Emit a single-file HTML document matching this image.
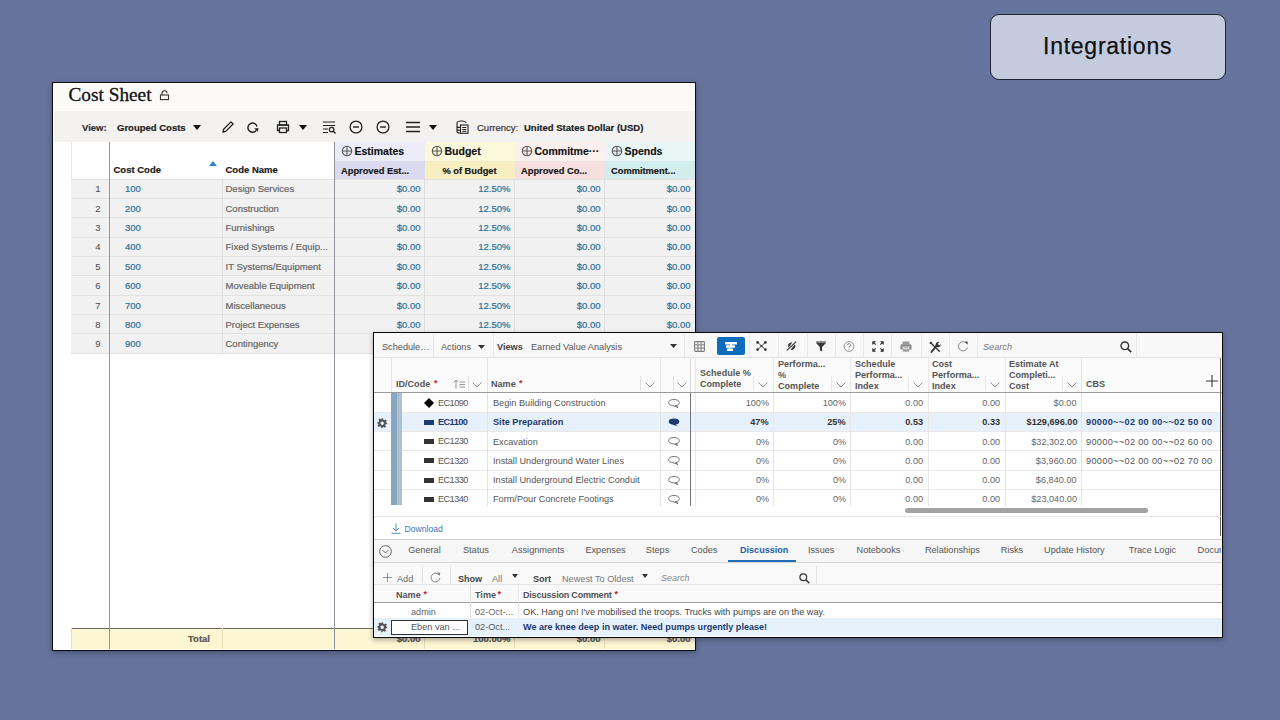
<!DOCTYPE html>
<html><head><meta charset="utf-8"><style>
*{margin:0;padding:0;box-sizing:border-box}
html,body{width:1280px;height:720px;overflow:hidden}
body{background:#66739c;font-family:"Liberation Sans",sans-serif;position:relative}
.a{position:absolute}
.t{position:absolute;white-space:nowrap;line-height:1}
.m{-webkit-text-stroke:0.2px currentColor}
svg{position:absolute;overflow:visible}
</style></head><body>
<div class="a" style="left:990px;top:14px;width:236px;height:66px;background:#c4cbdf;border:1px solid #1d2230;border-radius:9px"></div>
<div class="t " style="left:1043px;top:34.5px;transform-origin:left;font-size:23px;letter-spacing:0.75px;color:#111;-webkit-text-stroke:0.25px #111">Integrations</div>
<div class="a" style="left:52px;top:82px;width:644px;height:569px;background:#fff;border:1.5px solid #0c0c0c;border-right-width:1.2px;box-shadow:0 2px 5px rgba(20,25,50,0.35)"></div>
<div class="a" style="left:53.5px;top:83.5px;width:641px;height:27.5px;background:#fcfaf9"></div>
<div class="a" style="left:53.5px;top:111px;width:641px;height:31px;background:#f3f2f1"></div>
<div class="t " style="left:68.5px;top:84.6px;transform-origin:left;font-family:Liberation Serif,serif;font-size:19.3px;color:#111;-webkit-text-stroke:0.3px #111">Cost Sheet</div>
<svg style="left:159px;top:90px" width="11" height="11" viewBox="0 0 11 11"><path d="M3 5 V3.2 A2.5 2.5 0 0 1 8 3.2" fill="none" stroke="#333" stroke-width="1.1"/><rect x="1.5" y="5" width="8" height="4.6" fill="none" stroke="#333" stroke-width="1.1"/></svg>
<div class="t " style="left:82px;top:122.7px;transform-origin:left;-webkit-text-stroke:0.2px currentColor;font-size:9.5px;font-weight:bold;color:#333">View:</div>
<div class="t " style="left:117px;top:122.7px;transform-origin:left;-webkit-text-stroke:0.2px currentColor;font-size:9.5px;font-weight:bold;color:#222">Grouped Costs</div>
<svg style="left:193px;top:125px" width="8" height="5" viewBox="0 0 8 5"><path d="M0 0 H8 L4.0 5 Z" fill="#111"/></svg>
<svg style="left:221px;top:120px" width="14" height="14" viewBox="0 0 14 14"><path d="M2 12 L2.6 9.3 L10 1.9 L12.1 4 L4.7 11.4 Z" fill="none" stroke="#222" stroke-width="1.3" stroke-linejoin="round"/></svg>
<svg style="left:246px;top:121px" width="14" height="13" viewBox="0 0 14 13"><path d="M11 5.5 A4.6 4.6 0 1 0 10.2 9.4" fill="none" stroke="#222" stroke-width="1.4"/><path d="M8.2 7.2 L12.6 7.2 L11.6 10.8 Z" fill="#222"/></svg>
<svg style="left:276px;top:120px" width="14" height="14" viewBox="0 0 14 14"><rect x="3.5" y="1.5" width="7" height="3.5" fill="none" stroke="#222" stroke-width="1.3"/><path d="M3.5 10.5 H1.5 V5 H12.5 V10.5 H10.5" fill="none" stroke="#222" stroke-width="1.3"/><rect x="3.5" y="8" width="7" height="4.5" fill="none" stroke="#222" stroke-width="1.3"/></svg>
<svg style="left:299px;top:125px" width="8" height="5" viewBox="0 0 8 5"><path d="M0 0 H8 L4.0 5 Z" fill="#111"/></svg>
<svg style="left:322px;top:120px" width="15" height="14" viewBox="0 0 15 14"><path d="M1 2 H13 M1 5.5 H13 M1 9 H6 M1 12.5 H6" stroke="#222" stroke-width="1.2"/><circle cx="9.6" cy="9.6" r="2.3" fill="none" stroke="#222" stroke-width="1.2"/><path d="M11.3 11.3 L13.5 13.5" stroke="#222" stroke-width="1.4"/></svg>
<svg style="left:348.8px;top:120px" width="14" height="14" viewBox="0 0 14 14"><circle cx="7" cy="7" r="5.9" fill="none" stroke="#222" stroke-width="1.3"/><path d="M4 7 H10" stroke="#222" stroke-width="1.4"/></svg>
<svg style="left:375.7px;top:120px" width="14" height="14" viewBox="0 0 14 14"><circle cx="7" cy="7" r="5.9" fill="none" stroke="#222" stroke-width="1.3"/><path d="M4 7 H10" stroke="#222" stroke-width="1.4"/></svg>
<svg style="left:406px;top:121px" width="14" height="12" viewBox="0 0 14 12"><path d="M0 1.5 H14 M0 6 H14 M0 10.5 H14" stroke="#222" stroke-width="1.4"/></svg>
<svg style="left:429px;top:125px" width="8" height="5" viewBox="0 0 8 5"><path d="M0 0 H8 L4.0 5 Z" fill="#111"/></svg>
<svg style="left:455px;top:120px" width="14" height="14" viewBox="0 0 14 14"><path d="M2 3 V11.5 Q2 13 5 13 M2 3 Q2 1 6.5 1 Q11 1 11 3 M2 6 Q2 7.5 5 7.5 M2 9 Q2 10.3 5 10.3" fill="none" stroke="#222" stroke-width="1.1"/><rect x="5.5" y="5" width="7.5" height="8.3" fill="none" stroke="#222" stroke-width="1.1"/><path d="M7.3 7.5 H11.3 M7.3 9.5 H11.3 M7.3 11.3 H11.3" stroke="#222" stroke-width="1"/></svg>
<div class="t " style="left:477px;top:122.7px;transform-origin:left;-webkit-text-stroke:0.2px currentColor;font-size:9.5px;color:#333">Currency:</div>
<div class="t " style="left:524px;top:122.7px;transform-origin:left;-webkit-text-stroke:0.2px currentColor;font-size:9.5px;font-weight:bold;color:#222">United States Dollar (USD)</div>
<div class="a" style="left:70.5px;top:179.0px;width:624.0px;height:174.14999999999998px;background:#f1f1f1"></div>
<div class="a" style="left:334.5px;top:142px;width:90.0px;height:18.5px;background:#ecebf8"></div>
<div class="a" style="left:334.5px;top:160.5px;width:90.0px;height:18px;background:#dcdaee"></div>
<svg style="left:341.0px;top:145px" width="12" height="12" viewBox="0 0 12 12"><circle cx="6" cy="6" r="4.7" fill="none" stroke="#555" stroke-width="1.1"/><path d="M6 1.5 V10.5 M1.5 6 H10.5" stroke="#555" stroke-width="1.1"/></svg>
<div class="t " style="left:354.5px;top:145.5px;transform-origin:left;-webkit-text-stroke:0.15px currentColor;font-size:10.5px;font-weight:bold;color:#111">Estimates</div>
<div class="t " style="left:341.0px;top:167.3px;transform-origin:left;-webkit-text-stroke:0.2px currentColor;font-size:9.3px;font-weight:bold;color:#1a1a1a">Approved Est...</div>
<div class="a" style="left:424.5px;top:142px;width:90.0px;height:18.5px;background:#fcf8dc"></div>
<div class="a" style="left:424.5px;top:160.5px;width:90.0px;height:18px;background:#f7efc2"></div>
<svg style="left:431.0px;top:145px" width="12" height="12" viewBox="0 0 12 12"><circle cx="6" cy="6" r="4.7" fill="none" stroke="#555" stroke-width="1.1"/><path d="M6 1.5 V10.5 M1.5 6 H10.5" stroke="#555" stroke-width="1.1"/></svg>
<div class="t " style="left:444.5px;top:145.5px;transform-origin:left;-webkit-text-stroke:0.15px currentColor;font-size:10.5px;font-weight:bold;color:#111">Budget</div>
<div class="t " style="left:369.5px;width:200px;text-align:center;top:167.3px;-webkit-text-stroke:0.2px currentColor;font-size:9.3px;font-weight:bold;color:#1a1a1a">% of Budget</div>
<div class="a" style="left:514.5px;top:142px;width:90.0px;height:18.5px;background:#fcf0ef"></div>
<div class="a" style="left:514.5px;top:160.5px;width:90.0px;height:18px;background:#f6dfdf"></div>
<svg style="left:521.0px;top:145px" width="12" height="12" viewBox="0 0 12 12"><circle cx="6" cy="6" r="4.7" fill="none" stroke="#555" stroke-width="1.1"/><path d="M6 1.5 V10.5 M1.5 6 H10.5" stroke="#555" stroke-width="1.1"/></svg>
<div class="t " style="left:534.5px;top:145.5px;transform-origin:left;-webkit-text-stroke:0.15px currentColor;font-size:10.5px;font-weight:bold;color:#111">Commitme&middot;&middot;&middot;</div>
<div class="t " style="left:521.0px;top:167.3px;transform-origin:left;-webkit-text-stroke:0.2px currentColor;font-size:9.3px;font-weight:bold;color:#1a1a1a">Approved Co...</div>
<div class="a" style="left:604.5px;top:142px;width:90.0px;height:18.5px;background:#e9f6f6"></div>
<div class="a" style="left:604.5px;top:160.5px;width:90.0px;height:18px;background:#d3edee"></div>
<svg style="left:611.0px;top:145px" width="12" height="12" viewBox="0 0 12 12"><circle cx="6" cy="6" r="4.7" fill="none" stroke="#555" stroke-width="1.1"/><path d="M6 1.5 V10.5 M1.5 6 H10.5" stroke="#555" stroke-width="1.1"/></svg>
<div class="t " style="left:624.5px;top:145.5px;transform-origin:left;-webkit-text-stroke:0.15px currentColor;font-size:10.5px;font-weight:bold;color:#111">Spends</div>
<div class="t " style="left:611.0px;top:167.3px;transform-origin:left;-webkit-text-stroke:0.2px currentColor;font-size:9.3px;font-weight:bold;color:#1a1a1a">Commitment...</div>
<div class="t " style="left:113.5px;top:165px;transform-origin:left;-webkit-text-stroke:0.2px currentColor;font-size:9.5px;font-weight:bold;color:#1a1a1a">Cost Code</div>
<div class="t " style="left:225.5px;top:165px;transform-origin:left;-webkit-text-stroke:0.2px currentColor;font-size:9.5px;font-weight:bold;color:#1a1a1a">Code Name</div>
<svg style="left:208.5px;top:161px" width="8" height="5" viewBox="0 0 8 5"><path d="M0 5 H8 L4 0 Z" fill="#2b86c9"/></svg>
<div class="a" style="left:70.5px;top:178.5px;width:624.0px;height:1px;background:#e2e2e2"></div>
<div class="a" style="left:70.5px;top:197.85px;width:624.0px;height:1px;background:#e2e2e2"></div>
<div class="a" style="left:70.5px;top:217.2px;width:624.0px;height:1px;background:#e2e2e2"></div>
<div class="a" style="left:70.5px;top:236.55px;width:624.0px;height:1px;background:#e2e2e2"></div>
<div class="a" style="left:70.5px;top:255.89999999999998px;width:624.0px;height:1px;background:#e2e2e2"></div>
<div class="a" style="left:70.5px;top:275.25px;width:624.0px;height:1px;background:#e2e2e2"></div>
<div class="a" style="left:70.5px;top:294.6px;width:624.0px;height:1px;background:#e2e2e2"></div>
<div class="a" style="left:70.5px;top:313.95000000000005px;width:624.0px;height:1px;background:#e2e2e2"></div>
<div class="a" style="left:70.5px;top:333.3px;width:624.0px;height:1px;background:#e2e2e2"></div>
<div class="a" style="left:70.5px;top:352.65px;width:624.0px;height:1px;background:#e2e2e2"></div>
<div class="t " style="right:1179.5px;top:184.4px;transform-origin:right;font-size:9.5px;color:#4a4a4a">1</div>
<div class="t " style="left:125px;top:184.4px;transform-origin:left;-webkit-text-stroke:0.2px currentColor;font-size:9.5px;color:#2a7099">100</div>
<div class="t " style="left:225.5px;top:184.4px;transform-origin:left;-webkit-text-stroke:0.2px currentColor;font-size:9.5px;color:#666">Design Services</div>
<div class="t " style="right:859.5px;top:184.4px;transform-origin:right;-webkit-text-stroke:0.2px currentColor;font-size:9.5px;color:#2a7099">$0.00</div>
<div class="t " style="right:769.5px;top:184.4px;transform-origin:right;-webkit-text-stroke:0.2px currentColor;font-size:9.5px;color:#2a7099">12.50%</div>
<div class="t " style="right:679.5px;top:184.4px;transform-origin:right;-webkit-text-stroke:0.2px currentColor;font-size:9.5px;color:#2a7099">$0.00</div>
<div class="t " style="right:589.5px;top:184.4px;transform-origin:right;-webkit-text-stroke:0.2px currentColor;font-size:9.5px;color:#2a7099">$0.00</div>
<div class="t " style="right:1179.5px;top:203.75px;transform-origin:right;font-size:9.5px;color:#4a4a4a">2</div>
<div class="t " style="left:125px;top:203.75px;transform-origin:left;-webkit-text-stroke:0.2px currentColor;font-size:9.5px;color:#2a7099">200</div>
<div class="t " style="left:225.5px;top:203.75px;transform-origin:left;-webkit-text-stroke:0.2px currentColor;font-size:9.5px;color:#666">Construction</div>
<div class="t " style="right:859.5px;top:203.75px;transform-origin:right;-webkit-text-stroke:0.2px currentColor;font-size:9.5px;color:#2a7099">$0.00</div>
<div class="t " style="right:769.5px;top:203.75px;transform-origin:right;-webkit-text-stroke:0.2px currentColor;font-size:9.5px;color:#2a7099">12.50%</div>
<div class="t " style="right:679.5px;top:203.75px;transform-origin:right;-webkit-text-stroke:0.2px currentColor;font-size:9.5px;color:#2a7099">$0.00</div>
<div class="t " style="right:589.5px;top:203.75px;transform-origin:right;-webkit-text-stroke:0.2px currentColor;font-size:9.5px;color:#2a7099">$0.00</div>
<div class="t " style="right:1179.5px;top:223.1px;transform-origin:right;font-size:9.5px;color:#4a4a4a">3</div>
<div class="t " style="left:125px;top:223.1px;transform-origin:left;-webkit-text-stroke:0.2px currentColor;font-size:9.5px;color:#2a7099">300</div>
<div class="t " style="left:225.5px;top:223.1px;transform-origin:left;-webkit-text-stroke:0.2px currentColor;font-size:9.5px;color:#666">Furnishings</div>
<div class="t " style="right:859.5px;top:223.1px;transform-origin:right;-webkit-text-stroke:0.2px currentColor;font-size:9.5px;color:#2a7099">$0.00</div>
<div class="t " style="right:769.5px;top:223.1px;transform-origin:right;-webkit-text-stroke:0.2px currentColor;font-size:9.5px;color:#2a7099">12.50%</div>
<div class="t " style="right:679.5px;top:223.1px;transform-origin:right;-webkit-text-stroke:0.2px currentColor;font-size:9.5px;color:#2a7099">$0.00</div>
<div class="t " style="right:589.5px;top:223.1px;transform-origin:right;-webkit-text-stroke:0.2px currentColor;font-size:9.5px;color:#2a7099">$0.00</div>
<div class="t " style="right:1179.5px;top:242.45000000000002px;transform-origin:right;font-size:9.5px;color:#4a4a4a">4</div>
<div class="t " style="left:125px;top:242.45000000000002px;transform-origin:left;-webkit-text-stroke:0.2px currentColor;font-size:9.5px;color:#2a7099">400</div>
<div class="t " style="left:225.5px;top:242.45000000000002px;transform-origin:left;-webkit-text-stroke:0.2px currentColor;font-size:9.5px;color:#666">Fixed Systems / Equip...</div>
<div class="t " style="right:859.5px;top:242.45000000000002px;transform-origin:right;-webkit-text-stroke:0.2px currentColor;font-size:9.5px;color:#2a7099">$0.00</div>
<div class="t " style="right:769.5px;top:242.45000000000002px;transform-origin:right;-webkit-text-stroke:0.2px currentColor;font-size:9.5px;color:#2a7099">12.50%</div>
<div class="t " style="right:679.5px;top:242.45000000000002px;transform-origin:right;-webkit-text-stroke:0.2px currentColor;font-size:9.5px;color:#2a7099">$0.00</div>
<div class="t " style="right:589.5px;top:242.45000000000002px;transform-origin:right;-webkit-text-stroke:0.2px currentColor;font-size:9.5px;color:#2a7099">$0.00</div>
<div class="t " style="right:1179.5px;top:261.79999999999995px;transform-origin:right;font-size:9.5px;color:#4a4a4a">5</div>
<div class="t " style="left:125px;top:261.79999999999995px;transform-origin:left;-webkit-text-stroke:0.2px currentColor;font-size:9.5px;color:#2a7099">500</div>
<div class="t " style="left:225.5px;top:261.79999999999995px;transform-origin:left;-webkit-text-stroke:0.2px currentColor;font-size:9.5px;color:#666">IT Systems/Equipment</div>
<div class="t " style="right:859.5px;top:261.79999999999995px;transform-origin:right;-webkit-text-stroke:0.2px currentColor;font-size:9.5px;color:#2a7099">$0.00</div>
<div class="t " style="right:769.5px;top:261.79999999999995px;transform-origin:right;-webkit-text-stroke:0.2px currentColor;font-size:9.5px;color:#2a7099">12.50%</div>
<div class="t " style="right:679.5px;top:261.79999999999995px;transform-origin:right;-webkit-text-stroke:0.2px currentColor;font-size:9.5px;color:#2a7099">$0.00</div>
<div class="t " style="right:589.5px;top:261.79999999999995px;transform-origin:right;-webkit-text-stroke:0.2px currentColor;font-size:9.5px;color:#2a7099">$0.00</div>
<div class="t " style="right:1179.5px;top:281.15px;transform-origin:right;font-size:9.5px;color:#4a4a4a">6</div>
<div class="t " style="left:125px;top:281.15px;transform-origin:left;-webkit-text-stroke:0.2px currentColor;font-size:9.5px;color:#2a7099">600</div>
<div class="t " style="left:225.5px;top:281.15px;transform-origin:left;-webkit-text-stroke:0.2px currentColor;font-size:9.5px;color:#666">Moveable Equipment</div>
<div class="t " style="right:859.5px;top:281.15px;transform-origin:right;-webkit-text-stroke:0.2px currentColor;font-size:9.5px;color:#2a7099">$0.00</div>
<div class="t " style="right:769.5px;top:281.15px;transform-origin:right;-webkit-text-stroke:0.2px currentColor;font-size:9.5px;color:#2a7099">12.50%</div>
<div class="t " style="right:679.5px;top:281.15px;transform-origin:right;-webkit-text-stroke:0.2px currentColor;font-size:9.5px;color:#2a7099">$0.00</div>
<div class="t " style="right:589.5px;top:281.15px;transform-origin:right;-webkit-text-stroke:0.2px currentColor;font-size:9.5px;color:#2a7099">$0.00</div>
<div class="t " style="right:1179.5px;top:300.5px;transform-origin:right;font-size:9.5px;color:#4a4a4a">7</div>
<div class="t " style="left:125px;top:300.5px;transform-origin:left;-webkit-text-stroke:0.2px currentColor;font-size:9.5px;color:#2a7099">700</div>
<div class="t " style="left:225.5px;top:300.5px;transform-origin:left;-webkit-text-stroke:0.2px currentColor;font-size:9.5px;color:#666">Miscellaneous</div>
<div class="t " style="right:859.5px;top:300.5px;transform-origin:right;-webkit-text-stroke:0.2px currentColor;font-size:9.5px;color:#2a7099">$0.00</div>
<div class="t " style="right:769.5px;top:300.5px;transform-origin:right;-webkit-text-stroke:0.2px currentColor;font-size:9.5px;color:#2a7099">12.50%</div>
<div class="t " style="right:679.5px;top:300.5px;transform-origin:right;-webkit-text-stroke:0.2px currentColor;font-size:9.5px;color:#2a7099">$0.00</div>
<div class="t " style="right:589.5px;top:300.5px;transform-origin:right;-webkit-text-stroke:0.2px currentColor;font-size:9.5px;color:#2a7099">$0.00</div>
<div class="t " style="right:1179.5px;top:319.85px;transform-origin:right;font-size:9.5px;color:#4a4a4a">8</div>
<div class="t " style="left:125px;top:319.85px;transform-origin:left;-webkit-text-stroke:0.2px currentColor;font-size:9.5px;color:#2a7099">800</div>
<div class="t " style="left:225.5px;top:319.85px;transform-origin:left;-webkit-text-stroke:0.2px currentColor;font-size:9.5px;color:#666">Project Expenses</div>
<div class="t " style="right:859.5px;top:319.85px;transform-origin:right;-webkit-text-stroke:0.2px currentColor;font-size:9.5px;color:#2a7099">$0.00</div>
<div class="t " style="right:769.5px;top:319.85px;transform-origin:right;-webkit-text-stroke:0.2px currentColor;font-size:9.5px;color:#2a7099">12.50%</div>
<div class="t " style="right:679.5px;top:319.85px;transform-origin:right;-webkit-text-stroke:0.2px currentColor;font-size:9.5px;color:#2a7099">$0.00</div>
<div class="t " style="right:589.5px;top:319.85px;transform-origin:right;-webkit-text-stroke:0.2px currentColor;font-size:9.5px;color:#2a7099">$0.00</div>
<div class="t " style="right:1179.5px;top:339.2px;transform-origin:right;font-size:9.5px;color:#4a4a4a">9</div>
<div class="t " style="left:125px;top:339.2px;transform-origin:left;-webkit-text-stroke:0.2px currentColor;font-size:9.5px;color:#2a7099">900</div>
<div class="t " style="left:225.5px;top:339.2px;transform-origin:left;-webkit-text-stroke:0.2px currentColor;font-size:9.5px;color:#666">Contingency</div>
<div class="t " style="right:859.5px;top:339.2px;transform-origin:right;-webkit-text-stroke:0.2px currentColor;font-size:9.5px;color:#2a7099">$0.00</div>
<div class="t " style="right:769.5px;top:339.2px;transform-origin:right;-webkit-text-stroke:0.2px currentColor;font-size:9.5px;color:#2a7099">12.50%</div>
<div class="t " style="right:679.5px;top:339.2px;transform-origin:right;-webkit-text-stroke:0.2px currentColor;font-size:9.5px;color:#2a7099">$0.00</div>
<div class="t " style="right:589.5px;top:339.2px;transform-origin:right;-webkit-text-stroke:0.2px currentColor;font-size:9.5px;color:#2a7099">$0.00</div>
<div class="a" style="left:221.5px;top:179.0px;width:1px;height:174.14999999999998px;background:#dedede"></div>
<div class="a" style="left:424.0px;top:179.0px;width:1px;height:174.14999999999998px;background:#dedede"></div>
<div class="a" style="left:514.0px;top:179.0px;width:1px;height:174.14999999999998px;background:#dedede"></div>
<div class="a" style="left:604.0px;top:179.0px;width:1px;height:174.14999999999998px;background:#dedede"></div>
<div class="a" style="left:70.5px;top:142px;width:1px;height:36.5px;background:#e8e8e8"></div>
<div class="a" style="left:70.5px;top:628px;width:624.0px;height:20.5px;background:#fdf6d2"></div>
<div class="a" style="left:70.5px;top:627.5px;width:624.0px;height:1.3px;background:#6f6a5c"></div>
<div class="a" style="left:221.5px;top:628px;width:1px;height:20.5px;background:#e5ddb8"></div>
<div class="a" style="left:424.0px;top:628px;width:1px;height:20.5px;background:#e5ddb8"></div>
<div class="a" style="left:514.0px;top:628px;width:1px;height:20.5px;background:#e5ddb8"></div>
<div class="a" style="left:604.0px;top:628px;width:1px;height:20.5px;background:#e5ddb8"></div>
<div class="a" style="left:70.5px;top:628px;width:1px;height:20.5px;background:#e0dcc8"></div>
<div class="t " style="left:99px;width:200px;text-align:center;top:633.5px;-webkit-text-stroke:0.2px currentColor;font-size:9.5px;font-weight:bold;color:#555">Total</div>
<div class="t " style="right:859.5px;top:633.5px;transform-origin:right;-webkit-text-stroke:0.2px currentColor;font-size:9.5px;font-weight:bold;color:#555">$0.00</div>
<div class="t " style="right:769.5px;top:633.5px;transform-origin:right;-webkit-text-stroke:0.2px currentColor;font-size:9.5px;font-weight:bold;color:#555">100.00%</div>
<div class="t " style="right:679.5px;top:633.5px;transform-origin:right;-webkit-text-stroke:0.2px currentColor;font-size:9.5px;font-weight:bold;color:#555">$0.00</div>
<div class="t " style="right:589.5px;top:633.5px;transform-origin:right;-webkit-text-stroke:0.2px currentColor;font-size:9.5px;font-weight:bold;color:#555">$0.00</div>
<div class="a" style="left:109.0px;top:142px;width:1px;height:506.5px;background:#94949c"></div>
<div class="a" style="left:333.9px;top:142px;width:1.4px;height:506.5px;background:#92929a"></div>
<div class="a" style="left:373px;top:332px;width:850px;height:305.5px;background:#fff;border:1.2px solid #0a0a0a;border-right-width:1.8px;box-shadow:0 2px 5px rgba(20,25,50,0.35)"></div>
<div class="a" style="left:374px;top:333.2px;width:848px;height:24px;background:#f8f8f8"></div>
<div class="a" style="left:374px;top:357px;width:848px;height:1px;background:#e3e3e3"></div>
<div class="t " style="left:382px;top:341.5px;transform-origin:left;font-size:9.8px;transform:scaleX(0.935);color:#555">Schedule&hellip;</div>
<div class="a" style="left:432.5px;top:334px;width:1px;height:23px;background:#e6e6e6"></div>
<div class="t " style="left:441px;top:341.5px;transform-origin:left;font-size:9.8px;transform:scaleX(0.935);color:#555">Actions</div>
<svg style="left:477.5px;top:344.5px" width="7" height="4" viewBox="0 0 7 4"><path d="M0 0 H7 L3.5 4 Z" fill="#333"/></svg>
<div class="a" style="left:493px;top:334px;width:1px;height:23px;background:#e6e6e6"></div>
<div class="t " style="left:497px;top:341.5px;transform-origin:left;font-size:9.8px;transform:scaleX(0.935);font-weight:bold;color:#444">Views</div>
<div class="t " style="left:530.5px;top:341.5px;transform-origin:left;font-size:9.8px;transform:scaleX(0.935);color:#555">Earned Value Analysis</div>
<svg style="left:669.5px;top:344px" width="7" height="4" viewBox="0 0 7 4"><path d="M0 0 H7 L3.5 4 Z" fill="#333"/></svg>
<div class="a" style="left:684px;top:334px;width:1px;height:23px;background:#e6e6e6"></div>
<svg style="left:694.3px;top:341px" width="11" height="11" viewBox="0 0 11 11"><rect x="0.6" y="0.6" width="9.8" height="9.8" rx="0.8" fill="none" stroke="#7d7d7d" stroke-width="1.1"/><path d="M0.6 3.9 H10.4 M0.6 7.1 H10.4 M3.9 0.6 V10.4 M7.1 0.6 V10.4" stroke="#7d7d7d" stroke-width="1"/></svg>
<div class="a" style="left:717.3px;top:337px;width:27.5px;height:17.6px;background:#0f6cbd;border-radius:2px"></div>
<svg style="left:724px;top:340.5px" width="14" height="11" viewBox="0 0 14 11"><path d="M1 1 H13 V3.6 H8 V4.2 H11 V6.8 H6 V7.4 H9 V10 H3 V7.4 H5 V6.8 H2 V4.2 H6 V3.6 H1 Z" fill="#fff"/></svg>
<div class="a" style="left:749.4px;top:334px;width:1px;height:23px;background:#e8e8e8"></div>
<div class="a" style="left:777.6px;top:334px;width:1px;height:23px;background:#e8e8e8"></div>
<div class="a" style="left:806.9px;top:334px;width:1px;height:23px;background:#e8e8e8"></div>
<div class="a" style="left:835px;top:334px;width:1px;height:23px;background:#e8e8e8"></div>
<div class="a" style="left:863px;top:334px;width:1px;height:23px;background:#e8e8e8"></div>
<div class="a" style="left:891px;top:334px;width:1px;height:23px;background:#e8e8e8"></div>
<div class="a" style="left:920.5px;top:334px;width:1px;height:23px;background:#e8e8e8"></div>
<div class="a" style="left:948.7px;top:334px;width:1px;height:23px;background:#e8e8e8"></div>
<div class="a" style="left:976.8px;top:334px;width:1px;height:23px;background:#e8e8e8"></div>
<div class="a" style="left:1136px;top:334px;width:1px;height:23px;background:#e8e8e8"></div>
<svg style="left:756px;top:341.3px" width="11" height="10" viewBox="0 0 11 10"><path d="M2 1.6 L9 8.4 M9 1.6 L2 8.4" stroke="#333" stroke-width="0.9"/><circle cx="1.6" cy="1.4" r="1.35" fill="#333"/><circle cx="9.4" cy="1.4" r="1.35" fill="#333"/><circle cx="1.6" cy="8.6" r="1.35" fill="#333"/><circle cx="9.4" cy="8.6" r="1.35" fill="#333"/><circle cx="5.5" cy="5" r="1.1" fill="#333"/></svg>
<svg style="left:786px;top:341.3px" width="11" height="10" viewBox="0 0 11 10"><path d="M0.8 9.4 L10.2 0.6" stroke="#3a3a3a" stroke-width="1.2"/><path d="M2.2 3.4 Q3.3 0.9 6.2 1.6 L2.8 6.4 Q1.6 5.2 2.2 3.4 Z" fill="#3a3a3a"/><path d="M8.9 3.2 Q10.6 6.4 6.8 8.8 Q5.6 9.3 4.6 8.6 Z" fill="#3a3a3a"/></svg>
<svg style="left:815.5px;top:341px" width="10" height="11" viewBox="0 0 10 11"><path d="M0.3 0.5 H9.7 V2.2 L6.1 6 V10.5 L3.9 9.3 V6 L0.3 2.2 Z" fill="#333"/><rect x="0.3" y="0.5" width="9.4" height="1.6" fill="#888"/></svg>
<svg style="left:842.7px;top:341.2px" width="12" height="11" viewBox="0 0 12 11"><circle cx="6" cy="5.5" r="4.9" fill="none" stroke="#8a8a8a" stroke-width="0.9"/><path d="M4.4 4.2 Q4.4 2.6 6 2.6 Q7.6 2.6 7.6 4 Q7.6 4.9 6.1 5.6 V6.7" fill="none" stroke="#8a8a8a" stroke-width="0.9"/><circle cx="6" cy="8.2" r="0.55" fill="#8a8a8a"/></svg>
<svg style="left:871.6px;top:341.2px" width="12" height="11" viewBox="0 0 12 11"><path d="M0.6 3.4 V0.6 H3.4 Z M8.6 0.6 H11.4 V3.4 Z M11.4 7.6 V10.4 H8.6 Z M3.4 10.4 H0.6 V7.6 Z" fill="#333" stroke="#333" stroke-width="0.6"/><path d="M1.3 1.3 L3.8 3.6 M10.7 1.3 L8.2 3.6 M10.7 9.7 L8.2 7.4 M1.3 9.7 L3.8 7.4" stroke="#333" stroke-width="1.1"/></svg>
<svg style="left:900px;top:341.2px" width="12" height="11" viewBox="0 0 12 11"><rect x="2.6" y="0.5" width="6.8" height="3" fill="#9a9a9a"/><path d="M1.8 3.2 H10.2 Q11.6 3.2 11.6 4.8 V8.6 H0.4 V4.8 Q0.4 3.2 1.8 3.2 Z" fill="#8c8c8c"/><rect x="2.8" y="5.6" width="6.4" height="2.2" fill="#f4f4f4"/><rect x="2.8" y="8.6" width="6.4" height="2" fill="#9a9a9a"/><path d="M3.8 6.7 H8.2" stroke="#8c8c8c" stroke-width="0.7"/></svg>
<svg style="left:929px;top:341px" width="12" height="12" viewBox="0 0 12 12"><path d="M2.4 11 L7.2 5.2" stroke="#333" stroke-width="1.9" stroke-linecap="round"/><path d="M6.8 5.6 Q5.8 2.6 8.2 1.2 Q9.6 0.6 10.6 1 L8.8 2.8 L9.4 3.8 L10.8 4.2 L11.4 2.4 Q12 4.6 10.2 6 Q8.6 6.8 6.8 5.6 Z" fill="#333"/><path d="M1.2 1.2 L10.8 10.8" stroke="#333" stroke-width="1.3"/><path d="M0.4 2.2 L2.2 0.4 L3.2 1.4 L1.4 3.2 Z" fill="#333"/></svg>
<svg style="left:957px;top:341px" width="12" height="11" viewBox="0 0 12 11"><path d="M9.8 2.6 A4.6 4.6 0 1 0 10.5 6.6" fill="none" stroke="#8a8a8a" stroke-width="1"/><path d="M7.6 0.6 L10.9 0.4 L10.5 3.7 Z" fill="#555"/></svg>
<div class="t " style="left:983px;top:341.5px;transform-origin:left;font-size:9.8px;transform:scaleX(0.935);font-style:italic;color:#777">Search</div>
<svg style="left:1119.5px;top:340.5px" width="12" height="12" viewBox="0 0 12 12"><circle cx="4.8" cy="4.8" r="3.8" fill="none" stroke="#333" stroke-width="1.4"/><path d="M7.6 7.6 L11.2 11.2" stroke="#333" stroke-width="1.7"/></svg>
<div class="a" style="left:374px;top:358px;width:848px;height:34px;background:#fbfbfb"></div>
<div class="a" style="left:374px;top:391.5px;width:848px;height:1.8px;background:#9b9b9b"></div>
<div class="a" style="left:391px;top:358px;width:1px;height:34px;background:#e4e4e4"></div>
<div class="a" style="left:487px;top:358px;width:1px;height:34px;background:#e4e4e4"></div>
<div class="a" style="left:660px;top:358px;width:1px;height:34px;background:#e4e4e4"></div>
<div class="a" style="left:1081.3px;top:358px;width:1px;height:34px;background:#e4e4e4"></div>
<div class="a" style="left:695.2px;top:358px;width:1px;height:34px;background:#e8e8e8"></div>
<div class="a" style="left:773.4px;top:358px;width:1px;height:34px;background:#e8e8e8"></div>
<div class="a" style="left:850px;top:358px;width:1px;height:34px;background:#e8e8e8"></div>
<div class="a" style="left:927.5px;top:358px;width:1px;height:34px;background:#e8e8e8"></div>
<div class="a" style="left:1004.5px;top:358px;width:1px;height:34px;background:#e8e8e8"></div>
<div class="a" style="left:690.3px;top:358px;width:1px;height:34px;background:#d6d6d6"></div>
<div class="t " style="left:396px;top:379px;transform-origin:left;font-size:9.8px;font-weight:bold;transform:scaleX(0.925);color:#555;line-height:10.8px;">ID/Code</div>
<div class="t " style="left:434px;top:379px;transform-origin:left;font-size:9px;font-weight:bold;color:#c0282d">*</div>
<svg style="left:453px;top:378.5px" width="13" height="10" viewBox="0 0 13 10"><path d="M3 9.5 V1 M0.8 3.2 L3 1 L5.2 3.2" fill="none" stroke="#888" stroke-width="0.9"/><path d="M6.5 3 H12 M6.5 5.5 H12 M6.5 8 H12" stroke="#888" stroke-width="0.9"/></svg>
<div class="a" style="left:467.5px;top:376px;width:1px;height:15px;background:#e2e2e2"></div>
<svg style="left:472px;top:382px" width="10" height="6" viewBox="0 0 10 6"><path d="M0.5 0.5 L5 5 L9.5 0.5" fill="none" stroke="#888" stroke-width="0.9"/></svg>
<div class="t " style="left:491px;top:379px;transform-origin:left;font-size:9.8px;font-weight:bold;transform:scaleX(0.925);color:#555;line-height:10.8px;">Name</div>
<div class="t " style="left:519px;top:379px;transform-origin:left;font-size:9px;font-weight:bold;color:#c0282d">*</div>
<div class="a" style="left:640px;top:376px;width:1px;height:15px;background:#e2e2e2"></div>
<svg style="left:644.5px;top:382px" width="10" height="6" viewBox="0 0 10 6"><path d="M0.5 0.5 L5 5 L9.5 0.5" fill="none" stroke="#888" stroke-width="0.9"/></svg>
<div class="a" style="left:672.5px;top:376px;width:1px;height:15px;background:#e2e2e2"></div>
<svg style="left:677px;top:382px" width="10" height="6" viewBox="0 0 10 6"><path d="M0.5 0.5 L5 5 L9.5 0.5" fill="none" stroke="#888" stroke-width="0.9"/></svg>
<div class="t " style="left:699.7px;top:367.7px;transform-origin:left;font-size:9.8px;font-weight:bold;transform:scaleX(0.925);color:#555;line-height:10.8px;">Schedule %</div>
<div class="t " style="left:699.7px;top:379.1px;transform-origin:left;font-size:9.8px;font-weight:bold;transform:scaleX(0.925);color:#555;line-height:10.8px;">Complete</div>
<div class="a" style="left:752.7px;top:376px;width:1px;height:15px;background:#e9e9e9"></div>
<svg style="left:757.9000000000001px;top:382.3px" width="10" height="6" viewBox="0 0 10 6"><path d="M0.5 0.5 L5 5 L9.5 0.5" fill="none" stroke="#888" stroke-width="0.9"/></svg>
<div class="t " style="left:777.9px;top:358.5px;transform-origin:left;font-size:9.8px;font-weight:bold;transform:scaleX(0.925);color:#555;line-height:10.8px;">Performa...</div>
<div class="t " style="left:777.9px;top:369.9px;transform-origin:left;font-size:9.8px;font-weight:bold;transform:scaleX(0.925);color:#555;line-height:10.8px;">%</div>
<div class="t " style="left:777.9px;top:381.3px;transform-origin:left;font-size:9.8px;font-weight:bold;transform:scaleX(0.925);color:#555;line-height:10.8px;">Complete</div>
<div class="a" style="left:830.9px;top:376px;width:1px;height:15px;background:#e9e9e9"></div>
<svg style="left:836.1px;top:382.3px" width="10" height="6" viewBox="0 0 10 6"><path d="M0.5 0.5 L5 5 L9.5 0.5" fill="none" stroke="#888" stroke-width="0.9"/></svg>
<div class="t " style="left:854.5px;top:358.5px;transform-origin:left;font-size:9.8px;font-weight:bold;transform:scaleX(0.925);color:#555;line-height:10.8px;">Schedule</div>
<div class="t " style="left:854.5px;top:369.9px;transform-origin:left;font-size:9.8px;font-weight:bold;transform:scaleX(0.925);color:#555;line-height:10.8px;">Performa...</div>
<div class="t " style="left:854.5px;top:381.3px;transform-origin:left;font-size:9.8px;font-weight:bold;transform:scaleX(0.925);color:#555;line-height:10.8px;">Index</div>
<div class="a" style="left:907.5px;top:376px;width:1px;height:15px;background:#e9e9e9"></div>
<svg style="left:912.7px;top:382.3px" width="10" height="6" viewBox="0 0 10 6"><path d="M0.5 0.5 L5 5 L9.5 0.5" fill="none" stroke="#888" stroke-width="0.9"/></svg>
<div class="t " style="left:932.0px;top:358.5px;transform-origin:left;font-size:9.8px;font-weight:bold;transform:scaleX(0.925);color:#555;line-height:10.8px;">Cost</div>
<div class="t " style="left:932.0px;top:369.9px;transform-origin:left;font-size:9.8px;font-weight:bold;transform:scaleX(0.925);color:#555;line-height:10.8px;">Performa...</div>
<div class="t " style="left:932.0px;top:381.3px;transform-origin:left;font-size:9.8px;font-weight:bold;transform:scaleX(0.925);color:#555;line-height:10.8px;">Index</div>
<div class="a" style="left:985.0px;top:376px;width:1px;height:15px;background:#e9e9e9"></div>
<svg style="left:990.2px;top:382.3px" width="10" height="6" viewBox="0 0 10 6"><path d="M0.5 0.5 L5 5 L9.5 0.5" fill="none" stroke="#888" stroke-width="0.9"/></svg>
<div class="t " style="left:1009.0px;top:358.5px;transform-origin:left;font-size:9.8px;font-weight:bold;transform:scaleX(0.925);color:#555;line-height:10.8px;">Estimate At</div>
<div class="t " style="left:1009.0px;top:369.9px;transform-origin:left;font-size:9.8px;font-weight:bold;transform:scaleX(0.925);color:#555;line-height:10.8px;">Completi...</div>
<div class="t " style="left:1009.0px;top:381.3px;transform-origin:left;font-size:9.8px;font-weight:bold;transform:scaleX(0.925);color:#555;line-height:10.8px;">Cost</div>
<div class="a" style="left:1062.0px;top:376px;width:1px;height:15px;background:#e9e9e9"></div>
<svg style="left:1067.2px;top:382.3px" width="10" height="6" viewBox="0 0 10 6"><path d="M0.5 0.5 L5 5 L9.5 0.5" fill="none" stroke="#888" stroke-width="0.9"/></svg>
<div class="t " style="left:1085.5px;top:379px;transform-origin:left;font-size:9.8px;font-weight:bold;transform:scaleX(0.925);color:#555;line-height:10.8px;">CBS</div>
<svg style="left:1205.5px;top:375px" width="12" height="12" viewBox="0 0 12 12"><path d="M6 0 V12 M0 6 H12" stroke="#3a3a3a" stroke-width="1.1"/></svg>
<div class="a" style="left:374px;top:412.25px;width:848px;height:19.25px;background:#e6f1fb"></div>
<div class="a" style="left:374px;top:411.75px;width:848px;height:1px;background:#e9e9e9"></div>
<div class="a" style="left:374px;top:431.0px;width:848px;height:1px;background:#e9e9e9"></div>
<div class="a" style="left:374px;top:450.25px;width:848px;height:1px;background:#e9e9e9"></div>
<div class="a" style="left:374px;top:469.5px;width:848px;height:1px;background:#e9e9e9"></div>
<div class="a" style="left:374px;top:488.75px;width:848px;height:1px;background:#e9e9e9"></div>
<div class="a" style="left:486.7px;top:393px;width:1px;height:113px;background:#e3e3e3"></div>
<div class="a" style="left:659.7px;top:393px;width:1px;height:113px;background:#e3e3e3"></div>
<div class="a" style="left:1081.0px;top:393px;width:1px;height:113px;background:#e3e3e3"></div>
<div class="a" style="left:773.4px;top:393px;width:1px;height:113px;background:#ebe7e7"></div>
<div class="a" style="left:850px;top:393px;width:1px;height:113px;background:#ebe7e7"></div>
<div class="a" style="left:927.5px;top:393px;width:1px;height:113px;background:#ebe7e7"></div>
<div class="a" style="left:1004.5px;top:393px;width:1px;height:113px;background:#ebe7e7"></div>
<div class="a" style="left:690.3px;top:393px;width:1px;height:113px;background:#6d7480"></div>
<div class="a" style="left:695px;top:393px;width:1px;height:113px;background:#ebe7e7"></div>
<div class="a" style="left:391px;top:393px;width:5.6px;height:112px;background:#87a6c0"></div>
<div class="a" style="left:396.6px;top:393px;width:5.4px;height:112px;background:#abc1d3"></div>
<svg style="left:377.3px;top:418.3px" width="10.4" height="10.4" viewBox="0 0 12 12"><path fill="#555" fill-rule="evenodd" d="M5 0.3 H7 L7.3 1.9 L8.6 2.5 L10 1.6 L11.4 3 L10.5 4.4 L11.1 5.7 L11.7 6 V7 L10.1 7.3 L9.5 8.6 L10.4 10 L9 11.4 L7.6 10.5 L6.3 11.1 L6 11.7 H5 L4.7 10.1 L3.4 9.5 L2 10.4 L0.6 9 L1.5 7.6 L0.9 6.3 L0.3 6 V5 L1.9 4.7 L2.5 3.4 L1.6 2 L3 0.6 L4.4 1.5 L5.7 0.9 Z M6 4 A2 2 0 1 0 6.01 4 Z"/></svg>
<svg style="left:423.5px;top:397.5px" width="10" height="10" viewBox="0 0 10 10"><path d="M5 0 L10 5 L5 10 L0 5 Z" fill="#000"/></svg>
<div class="t " style="left:438px;top:397.9px;transform-origin:left;font-size:9.8px;transform:scaleX(0.935);color:#555;letter-spacing:-0.6px">EC1090</div>
<div class="t " style="left:493.3px;top:398.2px;transform-origin:left;font-size:9.8px;transform:scaleX(0.935);color:#555">Begin Building Construction</div>
<svg style="left:667.5px;top:398.5px" width="12" height="9" viewBox="0 0 12 9"><path d="M6 0.5 C9.3 0.5 11.3 1.8 11.3 3.6 C11.3 5.4 9.5 6.6 7.5 6.7 L10 8.5 L5 6.7 C2.5 6.6 0.7 5.4 0.7 3.6 C0.7 1.8 2.7 0.5 6 0.5 Z" fill="none" stroke="#666" stroke-width="0.9"/></svg>
<div class="t " style="right:511px;top:398.2px;transform-origin:right;font-size:9.8px;transform:scaleX(0.935);color:#666">100%</div>
<div class="t " style="right:434px;top:398.2px;transform-origin:right;font-size:9.8px;transform:scaleX(0.935);color:#666">100%</div>
<div class="t " style="right:357px;top:398.2px;transform-origin:right;font-size:9.8px;transform:scaleX(0.935);color:#666">0.00</div>
<div class="t " style="right:280px;top:398.2px;transform-origin:right;font-size:9.8px;transform:scaleX(0.935);color:#666">0.00</div>
<div class="t " style="right:203px;top:398.2px;transform-origin:right;font-size:9.8px;transform:scaleX(0.935);color:#666">$0.00</div>
<div class="a" style="left:423.6px;top:419.85px;width:10.4px;height:5px;background:#1b3a70"></div>
<div class="t " style="left:438px;top:417.15px;transform-origin:left;font-size:9.8px;transform:scaleX(0.935);font-weight:bold;color:#1c3a6e;letter-spacing:-0.6px">EC1100</div>
<div class="t " style="left:493.3px;top:417.45px;transform-origin:left;font-size:9.8px;transform:scaleX(0.935);font-weight:bold;color:#1c3a6e">Site Preparation</div>
<svg style="left:667.5px;top:417.75px" width="12" height="9" viewBox="0 0 12 9"><path d="M6 0.5 C9.3 0.5 11.3 1.8 11.3 3.6 C11.3 5.4 9.5 6.6 7.5 6.7 L10 8.5 L5 6.7 C2.5 6.6 0.7 5.4 0.7 3.6 C0.7 1.8 2.7 0.5 6 0.5 Z" fill="#1b3a70"/></svg>
<div class="t " style="right:511px;top:417.45px;transform-origin:right;font-size:9.8px;transform:scaleX(0.935);font-weight:bold;color:#333">47%</div>
<div class="t " style="right:434px;top:417.45px;transform-origin:right;font-size:9.8px;transform:scaleX(0.935);font-weight:bold;color:#333">25%</div>
<div class="t " style="right:357px;top:417.45px;transform-origin:right;font-size:9.8px;transform:scaleX(0.935);font-weight:bold;color:#333">0.53</div>
<div class="t " style="right:280px;top:417.45px;transform-origin:right;font-size:9.8px;transform:scaleX(0.935);font-weight:bold;color:#333">0.33</div>
<div class="t " style="right:203px;top:417.45px;transform-origin:right;font-size:9.8px;transform:scaleX(0.935);font-weight:bold;color:#333">$129,696.00</div>
<div class="t " style="left:1085.5px;top:417.45px;transform-origin:left;font-size:9.8px;transform:scaleX(0.935);font-weight:bold;letter-spacing:0.35px;color:#1c3a6e">90000~~02 00 00~~02 50 00</div>
<div class="a" style="left:423.6px;top:439.1px;width:10.4px;height:5px;background:#333"></div>
<div class="t " style="left:438px;top:436.4px;transform-origin:left;font-size:9.8px;transform:scaleX(0.935);color:#555;letter-spacing:-0.6px">EC1230</div>
<div class="t " style="left:493.3px;top:436.7px;transform-origin:left;font-size:9.8px;transform:scaleX(0.935);color:#555">Excavation</div>
<svg style="left:667.5px;top:437.0px" width="12" height="9" viewBox="0 0 12 9"><path d="M6 0.5 C9.3 0.5 11.3 1.8 11.3 3.6 C11.3 5.4 9.5 6.6 7.5 6.7 L10 8.5 L5 6.7 C2.5 6.6 0.7 5.4 0.7 3.6 C0.7 1.8 2.7 0.5 6 0.5 Z" fill="none" stroke="#666" stroke-width="0.9"/></svg>
<div class="t " style="right:511px;top:436.7px;transform-origin:right;font-size:9.8px;transform:scaleX(0.935);color:#666">0%</div>
<div class="t " style="right:434px;top:436.7px;transform-origin:right;font-size:9.8px;transform:scaleX(0.935);color:#666">0%</div>
<div class="t " style="right:357px;top:436.7px;transform-origin:right;font-size:9.8px;transform:scaleX(0.935);color:#666">0.00</div>
<div class="t " style="right:280px;top:436.7px;transform-origin:right;font-size:9.8px;transform:scaleX(0.935);color:#666">0.00</div>
<div class="t " style="right:203px;top:436.7px;transform-origin:right;font-size:9.8px;transform:scaleX(0.935);color:#666">$32,302.00</div>
<div class="t " style="left:1085.5px;top:436.7px;transform-origin:left;font-size:9.8px;transform:scaleX(0.935);letter-spacing:0.35px;color:#555">90000~~02 00 00~~02 60 00</div>
<div class="a" style="left:423.6px;top:458.35px;width:10.4px;height:5px;background:#333"></div>
<div class="t " style="left:438px;top:455.65px;transform-origin:left;font-size:9.8px;transform:scaleX(0.935);color:#555;letter-spacing:-0.6px">EC1320</div>
<div class="t " style="left:493.3px;top:455.95px;transform-origin:left;font-size:9.8px;transform:scaleX(0.935);color:#555">Install Underground Water Lines</div>
<svg style="left:667.5px;top:456.25px" width="12" height="9" viewBox="0 0 12 9"><path d="M6 0.5 C9.3 0.5 11.3 1.8 11.3 3.6 C11.3 5.4 9.5 6.6 7.5 6.7 L10 8.5 L5 6.7 C2.5 6.6 0.7 5.4 0.7 3.6 C0.7 1.8 2.7 0.5 6 0.5 Z" fill="none" stroke="#666" stroke-width="0.9"/></svg>
<div class="t " style="right:511px;top:455.95px;transform-origin:right;font-size:9.8px;transform:scaleX(0.935);color:#666">0%</div>
<div class="t " style="right:434px;top:455.95px;transform-origin:right;font-size:9.8px;transform:scaleX(0.935);color:#666">0%</div>
<div class="t " style="right:357px;top:455.95px;transform-origin:right;font-size:9.8px;transform:scaleX(0.935);color:#666">0.00</div>
<div class="t " style="right:280px;top:455.95px;transform-origin:right;font-size:9.8px;transform:scaleX(0.935);color:#666">0.00</div>
<div class="t " style="right:203px;top:455.95px;transform-origin:right;font-size:9.8px;transform:scaleX(0.935);color:#666">$3,960.00</div>
<div class="t " style="left:1085.5px;top:455.95px;transform-origin:left;font-size:9.8px;transform:scaleX(0.935);letter-spacing:0.35px;color:#555">90000~~02 00 00~~02 70 00</div>
<div class="a" style="left:423.6px;top:477.6px;width:10.4px;height:5px;background:#333"></div>
<div class="t " style="left:438px;top:474.9px;transform-origin:left;font-size:9.8px;transform:scaleX(0.935);color:#555;letter-spacing:-0.6px">EC1330</div>
<div class="t " style="left:493.3px;top:475.2px;transform-origin:left;font-size:9.8px;transform:scaleX(0.935);color:#555">Install Underground Electric Conduit</div>
<svg style="left:667.5px;top:475.5px" width="12" height="9" viewBox="0 0 12 9"><path d="M6 0.5 C9.3 0.5 11.3 1.8 11.3 3.6 C11.3 5.4 9.5 6.6 7.5 6.7 L10 8.5 L5 6.7 C2.5 6.6 0.7 5.4 0.7 3.6 C0.7 1.8 2.7 0.5 6 0.5 Z" fill="none" stroke="#666" stroke-width="0.9"/></svg>
<div class="t " style="right:511px;top:475.2px;transform-origin:right;font-size:9.8px;transform:scaleX(0.935);color:#666">0%</div>
<div class="t " style="right:434px;top:475.2px;transform-origin:right;font-size:9.8px;transform:scaleX(0.935);color:#666">0%</div>
<div class="t " style="right:357px;top:475.2px;transform-origin:right;font-size:9.8px;transform:scaleX(0.935);color:#666">0.00</div>
<div class="t " style="right:280px;top:475.2px;transform-origin:right;font-size:9.8px;transform:scaleX(0.935);color:#666">0.00</div>
<div class="t " style="right:203px;top:475.2px;transform-origin:right;font-size:9.8px;transform:scaleX(0.935);color:#666">$6,840.00</div>
<div class="a" style="left:423.6px;top:496.85px;width:10.4px;height:5px;background:#333"></div>
<div class="t " style="left:438px;top:494.15px;transform-origin:left;font-size:9.8px;transform:scaleX(0.935);color:#555;letter-spacing:-0.6px">EC1340</div>
<div class="t " style="left:493.3px;top:494.45px;transform-origin:left;font-size:9.8px;transform:scaleX(0.935);color:#555">Form/Pour Concrete Footings</div>
<svg style="left:667.5px;top:494.75px" width="12" height="9" viewBox="0 0 12 9"><path d="M6 0.5 C9.3 0.5 11.3 1.8 11.3 3.6 C11.3 5.4 9.5 6.6 7.5 6.7 L10 8.5 L5 6.7 C2.5 6.6 0.7 5.4 0.7 3.6 C0.7 1.8 2.7 0.5 6 0.5 Z" fill="none" stroke="#666" stroke-width="0.9"/></svg>
<div class="t " style="right:511px;top:494.45px;transform-origin:right;font-size:9.8px;transform:scaleX(0.935);color:#666">0%</div>
<div class="t " style="right:434px;top:494.45px;transform-origin:right;font-size:9.8px;transform:scaleX(0.935);color:#666">0%</div>
<div class="t " style="right:357px;top:494.45px;transform-origin:right;font-size:9.8px;transform:scaleX(0.935);color:#666">0.00</div>
<div class="t " style="right:280px;top:494.45px;transform-origin:right;font-size:9.8px;transform:scaleX(0.935);color:#666">0.00</div>
<div class="t " style="right:203px;top:494.45px;transform-origin:right;font-size:9.8px;transform:scaleX(0.935);color:#666">$23,040.00</div>
<div class="a" style="left:1219.8px;top:358px;width:1.4px;height:178px;background:#6a6a6a"></div>
<div class="a" style="left:904.5px;top:507.8px;width:243.5px;height:5.4px;background:#a3a3a3;border-radius:3px"></div>
<div class="a" style="left:374px;top:515.5px;width:848px;height:1px;background:#e6e6e6"></div>
<svg style="left:391px;top:523px" width="10" height="11" viewBox="0 0 10 11"><path d="M5 0.5 V8 M2 5 L5 8 L8 5 M0.5 10.3 H9.5" fill="none" stroke="#4a7fc1" stroke-width="0.9"/></svg>
<div class="t " style="left:404.5px;top:524.5px;transform-origin:left;font-size:8.6px;color:#3e74b8">Download</div>
<div class="a" style="left:374px;top:538.5px;width:848px;height:24px;background:#f6f6f6"></div>
<div class="a" style="left:374px;top:538.5px;width:848px;height:1.2px;background:#cfcfcf"></div>
<div class="a" style="left:374px;top:562px;width:848px;height:1.2px;background:#d5d5d5"></div>
<svg style="left:379px;top:544.5px" width="13" height="13" viewBox="0 0 13 13"><circle cx="6.5" cy="6.5" r="5.8" fill="none" stroke="#555" stroke-width="0.9"/><path d="M3.7 5.2 L6.5 8 L9.3 5.2" fill="none" stroke="#555" stroke-width="0.9"/></svg>
<div class="a" style="left:407.3px;top:540px;width:813.7px;height:20px;overflow:hidden"><div class="t" style="left:0;top:4.9px;font-size:9.8px;transform:scaleX(0.935);color:#555">General</div></div>
<div class="a" style="left:462.0px;top:540px;width:759.0px;height:20px;overflow:hidden"><div class="t" style="left:0;top:4.9px;font-size:9.8px;transform:scaleX(0.935);color:#555">Status</div></div>
<div class="a" style="left:509.7px;top:540px;width:711.3px;height:20px;overflow:hidden"><div class="t" style="left:0;top:4.9px;font-size:9.8px;transform:scaleX(0.935);color:#555">Assignments</div></div>
<div class="a" style="left:583.8px;top:540px;width:637.2px;height:20px;overflow:hidden"><div class="t" style="left:0;top:4.9px;font-size:9.8px;transform:scaleX(0.935);color:#555">Expenses</div></div>
<div class="a" style="left:644.8px;top:540px;width:576.2px;height:20px;overflow:hidden"><div class="t" style="left:0;top:4.9px;font-size:9.8px;transform:scaleX(0.935);color:#555">Steps</div></div>
<div class="a" style="left:689.8px;top:540px;width:531.2px;height:20px;overflow:hidden"><div class="t" style="left:0;top:4.9px;font-size:9.8px;transform:scaleX(0.935);color:#555">Codes</div></div>
<div class="t " style="left:739.5px;top:544.9px;transform-origin:left;font-size:9.8px;font-weight:bold;transform:scaleX(0.925);color:#1d5fa8">Discussion</div>
<div class="a" style="left:806.8px;top:540px;width:414.20000000000005px;height:20px;overflow:hidden"><div class="t" style="left:0;top:4.9px;font-size:9.8px;transform:scaleX(0.935);color:#555">Issues</div></div>
<div class="a" style="left:854.5999999999999px;top:540px;width:366.4000000000001px;height:20px;overflow:hidden"><div class="t" style="left:0;top:4.9px;font-size:9.8px;transform:scaleX(0.935);color:#555">Notebooks</div></div>
<div class="a" style="left:922.6999999999999px;top:540px;width:298.30000000000007px;height:20px;overflow:hidden"><div class="t" style="left:0;top:4.9px;font-size:9.8px;transform:scaleX(0.935);color:#555">Relationships</div></div>
<div class="a" style="left:999.8px;top:540px;width:221.20000000000005px;height:20px;overflow:hidden"><div class="t" style="left:0;top:4.9px;font-size:9.8px;transform:scaleX(0.935);color:#555">Risks</div></div>
<div class="a" style="left:1042.1px;top:540px;width:178.9000000000001px;height:20px;overflow:hidden"><div class="t" style="left:0;top:4.9px;font-size:9.8px;transform:scaleX(0.935);color:#555">Update History</div></div>
<div class="a" style="left:1126.8px;top:540px;width:94.20000000000005px;height:20px;overflow:hidden"><div class="t" style="left:0;top:4.9px;font-size:9.8px;transform:scaleX(0.935);color:#555">Trace Logic</div></div>
<div class="a" style="left:1195.8px;top:540px;width:25.200000000000045px;height:20px;overflow:hidden"><div class="t" style="left:0;top:4.9px;font-size:9.8px;transform:scaleX(0.935);color:#555">Documents</div></div>
<div class="a" style="left:728px;top:559.5px;width:68px;height:2.2px;background:#1f6fb8"></div>
<div class="a" style="left:374px;top:563.2px;width:848px;height:22px;background:#f9f9f9"></div>
<div class="a" style="left:374px;top:584px;width:848px;height:1px;background:#e4e4e4"></div>
<svg style="left:383px;top:573px" width="9" height="9" viewBox="0 0 9 9"><path d="M4.5 0 V9 M0 4.5 H9" stroke="#888" stroke-width="0.9"/></svg>
<div class="t " style="left:396.8px;top:573.5px;transform-origin:left;font-size:9.8px;transform:scaleX(0.935);color:#666">Add</div>
<div class="a" style="left:421.5px;top:567px;width:1px;height:16px;background:#e2e2e2"></div>
<svg style="left:429.5px;top:572px" width="11" height="11" viewBox="0 0 11 11"><path d="M9.2 3.2 A4.4 4.4 0 1 0 9.9 6" fill="none" stroke="#777" stroke-width="0.9"/><path d="M7.2 0.6 L10.3 0.7 L9.6 3.8 Z" fill="#777"/></svg>
<div class="a" style="left:449.7px;top:567px;width:1px;height:18px;background:#e2e2e2"></div>
<div class="t " style="left:457.5px;top:573.5px;transform-origin:left;font-size:9.8px;font-weight:bold;transform:scaleX(0.925);color:#444">Show</div>
<div class="t " style="left:491.5px;top:573.5px;transform-origin:left;font-size:9.8px;transform:scaleX(0.935);color:#777">All</div>
<svg style="left:511.5px;top:573.5px" width="6" height="4" viewBox="0 0 6 4"><path d="M0 0 H6 L3.0 4 Z" fill="#333"/></svg>
<div class="t " style="left:532.5px;top:573.5px;transform-origin:left;font-size:9.8px;font-weight:bold;transform:scaleX(0.925);color:#444">Sort</div>
<div class="t " style="left:562px;top:573.5px;transform-origin:left;font-size:9.8px;transform:scaleX(0.935);color:#777">Newest To Oldest</div>
<svg style="left:641.5px;top:573.5px" width="6" height="4" viewBox="0 0 6 4"><path d="M0 0 H6 L3.0 4 Z" fill="#333"/></svg>
<div class="t " style="left:661px;top:573.5px;transform-origin:left;font-size:9px;font-style:italic;color:#888">Search</div>
<svg style="left:798.5px;top:572.5px" width="11" height="11" viewBox="0 0 11 11"><circle cx="4.3" cy="4.3" r="3.4" fill="none" stroke="#333" stroke-width="1.2"/><path d="M6.8 6.8 L10.3 10.3" stroke="#333" stroke-width="1.5"/></svg>
<div class="a" style="left:815.5px;top:566px;width:1px;height:18px;background:#e2e2e2"></div>
<div class="a" style="left:374px;top:585px;width:848px;height:17px;background:#f9f9f9"></div>
<div class="a" style="left:374px;top:601.8px;width:848px;height:1.3px;background:#9e9e9e"></div>
<div class="a" style="left:469.6px;top:585px;width:1px;height:51.5px;background:#e0e0e0"></div>
<div class="a" style="left:517.8px;top:585px;width:1px;height:51.5px;background:#e8e8e8"></div>
<div class="t " style="left:395.9px;top:589.8px;transform-origin:left;font-size:9.8px;font-weight:bold;transform:scaleX(0.925);color:#555;line-height:10.8px;">Name</div>
<div class="t " style="left:423.5px;top:589.8px;transform-origin:left;font-size:9px;font-weight:bold;color:#c0282d">*</div>
<div class="t " style="left:474.5px;top:589.8px;transform-origin:left;font-size:9.8px;font-weight:bold;transform:scaleX(0.925);color:#555;line-height:10.8px;">Time</div>
<div class="t " style="left:497.5px;top:589.8px;transform-origin:left;font-size:9px;font-weight:bold;color:#c0282d">*</div>
<div class="t " style="left:522.5px;top:589.8px;transform-origin:left;font-size:9.8px;font-weight:bold;transform:scaleX(0.925);color:#555;line-height:10.8px;letter-spacing:-0.25px">Discussion Comment</div>
<div class="t " style="left:614.5px;top:589.8px;transform-origin:left;font-size:9px;font-weight:bold;color:#c0282d">*</div>
<div class="t " style="left:410.5px;top:606.5px;transform-origin:left;font-size:9.8px;transform:scaleX(0.935);color:#666">admin</div>
<div class="t " style="left:474.5px;top:606.5px;transform-origin:left;font-size:9.8px;transform:scaleX(0.935);color:#666">02-Oct-...</div>
<div class="t " style="left:522.5px;top:606.5px;transform-origin:left;font-size:9.8px;transform:scaleX(0.935);color:#444">OK. Hang on! I've mobilised the troops. Trucks with pumps are on the way.</div>
<div class="a" style="left:374px;top:618.2px;width:848px;height:18.3px;background:#e6f1fb"></div>
<svg style="left:377.3px;top:622.3px" width="10.4" height="10.4" viewBox="0 0 12 12"><path fill="#555" fill-rule="evenodd" d="M5 0.3 H7 L7.3 1.9 L8.6 2.5 L10 1.6 L11.4 3 L10.5 4.4 L11.1 5.7 L11.7 6 V7 L10.1 7.3 L9.5 8.6 L10.4 10 L9 11.4 L7.6 10.5 L6.3 11.1 L6 11.7 H5 L4.7 10.1 L3.4 9.5 L2 10.4 L0.6 9 L1.5 7.6 L0.9 6.3 L0.3 6 V5 L1.9 4.7 L2.5 3.4 L1.6 2 L3 0.6 L4.4 1.5 L5.7 0.9 Z M6 4 A2 2 0 1 0 6.01 4 Z"/></svg>
<div class="a" style="left:391.4px;top:619.6px;width:76.2px;height:15px;background:#fff;border:1.3px solid #333"></div>
<div class="t " style="left:410.5px;top:621.6px;transform-origin:left;font-size:9.8px;transform:scaleX(0.935);color:#555">Eben van ...</div>
<div class="t " style="left:474.5px;top:621.6px;transform-origin:left;font-size:9.8px;transform:scaleX(0.935);color:#555">02-Oct...</div>
<div class="t " style="left:522.5px;top:621.6px;transform-origin:left;font-size:9.8px;font-weight:bold;transform:scaleX(0.925);color:#1c3a6e">We are knee deep in water. Need pumps urgently please!</div>
</body></html>
